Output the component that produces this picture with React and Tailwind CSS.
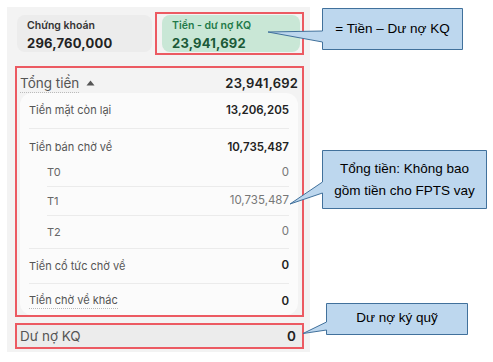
import React from "react";

const subRows = [
  { label: "T0", value: "0" },
  { label: "T1", value: "10,735,487" },
  { label: "T2", value: "0" },
];

function Caret() {
  return (
    <svg width="9" height="6" viewBox="0 0 9 6" className="ml-[7px] mt-[-1px]">
      <path d="M4.5 0.5 L8.5 5.5 H0.5 Z" fill="#555" />
    </svg>
  );
}

function Callouts() {
  return (
    <>
      <svg
        width="493"
        height="362"
        viewBox="0 0 493 362"
        className="absolute left-0 top-0 pointer-events-none"
      >
        <g fill="#BDD7EE" stroke="#41719C" strokeWidth="1">
          <path d="M322.5 8.5 H462.5 V49.5 H322.5 V42 L268 32 L322.5 31 Z" />
          <path d="M322.5 150.5 H486.5 V208.5 H322.5 V193 L290 204 L322.5 182 Z" />
          <path d="M326.5 303.5 H467.5 V334.5 H326.5 V330 L303 333.5 L326.5 322 Z" />
        </g>
      </svg>
      <div className="absolute left-[323px] top-[9px] w-[139px] h-[40px] flex items-center justify-center text-[13.5px] text-black font-['Liberation_Sans',sans-serif]">
        = Tiền – Dư nợ KQ
      </div>
      <div className="absolute left-[323px] top-[151px] w-[163px] h-[57px] flex flex-col items-center justify-center text-[13.5px] leading-[22px] text-black font-['Liberation_Sans',sans-serif]">
        <span>Tổng tiền: Không bao</span>
        <span>gồm tiền cho FPTS vay</span>
      </div>
      <div className="absolute left-[327px] top-[304px] w-[140px] h-[30px] flex items-center justify-center pb-[2px] text-[13.5px] text-black font-['Liberation_Sans',sans-serif]">
        Dư nợ ký quỹ
      </div>
    </>
  );
}

export default function App() {
  return (
    <div className="relative w-[493px] h-[362px] bg-white p-[7px] font-['Inter',sans-serif]">
      {/* ── Phone panel ── */}
      <div className="w-[303px] h-[345px] bg-[#f3f3f3] flex flex-col">
        {/* Top summary cards */}
        <div className="flex gap-[10px] px-[10px] pt-[8px]">
          <div className="flex-1 h-[37px] rounded-lg bg-[#ececec] pl-[10px] pt-[5px]">
            <div className="text-[10.5px] leading-[12px] font-semibold text-[#333]">Chứng khoán</div>
            <div className="mt-[3px] text-[13px] leading-[16px] font-bold text-[#222] tracking-[0.2px]">
              296,760,000
            </div>
          </div>
          <div className="w-[138px] h-[37px] rounded-lg bg-[#c9e7d6] pl-[10px] pt-[5px]">
            <div className="text-[10.5px] leading-[12px] font-semibold text-[#1f7a4a]">Tiền - dư nợ KQ</div>
            <div className="mt-[3px] text-[13px] leading-[16px] font-bold text-[#1b5a38] tracking-[0.2px]">
              23,941,692
            </div>
          </div>
        </div>

        {/* Tổng tiền */}
        <div className="mt-[22px] px-[13px] pr-[12px]">
          <div className="flex items-center justify-between h-[19px]">
            <div className="flex items-center">
              <span className="text-[13.5px] leading-[18px] text-[#555] border-b border-dotted border-[#bbb]">
                Tổng tiền
              </span>
              <Caret />
            </div>
            <span className="text-[13px] font-semibold text-[#222] tracking-[0.2px]">23,941,692</span>
          </div>

          <div className="h-[222px] rounded-xl bg-[#fbfbfb] px-[9px] text-[11px]">
            <div className="h-[36px] flex items-center justify-between border-b border-[#ebebeb]">
              <span className="text-[#555]">Tiền mặt còn lại</span>
              <span className="text-[11.5px] font-semibold text-[#222]">13,206,205</span>
            </div>
            <div className="h-[30px] pt-[10px] flex items-start justify-between leading-[16px]">
              <span className="text-[#555]">Tiền bán chờ về</span>
              <span className="text-[11.5px] font-semibold text-[#222]">10,735,487</span>
            </div>
            <div className="pl-[18px]">
              {subRows.map((r, i) => (
                <div
                  key={r.label}
                  className={`flex items-center justify-between text-[#666] ${
                    i === 0 ? "h-[28px] border-b border-[#ebebeb]" : i === 1 ? "h-[29px] border-b border-[#ebebeb]" : "h-[32px]"
                  }`}
                >
                  <span>{r.label}</span>
                  <span className="text-[11.5px] text-[#777]">{r.value}</span>
                </div>
              ))}
            </div>
            <div className="h-[36px] flex items-center justify-between border-t border-b border-[#ebebeb]">
              <span className="text-[#555]">Tiền cổ tức chờ về</span>
              <span className="text-[11.5px] font-semibold text-[#222]">0</span>
            </div>
            <div className="pt-[9px] flex items-start justify-between leading-[16px]">
              <span className="text-[#555] border-b border-dotted border-[#bbb] leading-[15px]">Tiền chờ về khác</span>
              <span className="text-[11.5px] font-semibold text-[#222]">0</span>
            </div>
          </div>
        </div>

        {/* Dư nợ KQ */}
        <div className="mt-[8px] mx-[8px] h-[26px] bg-[#ececec] flex items-center justify-between pl-[5px] pr-[6px]">
          <span className="text-[13.5px] text-[#555]">Dư nợ KQ</span>
          <span className="text-[13.5px] font-semibold text-[#222]">0</span>
        </div>
      </div>

      {/* ── Annotation boxes ── */}
      <div className="absolute left-[155px] top-[12px] w-[149px] h-[43px] border-2 border-[#ec5a62]" />
      <div className="absolute left-[15px] top-[66px] w-[289px] h-[251px] border-2 border-[#ec5a62]" />
      <div className="absolute left-[15px] top-[323px] w-[289px] h-[26px] border-2 border-[#ec5a62]" />

      <Callouts />
    </div>
  );
}
